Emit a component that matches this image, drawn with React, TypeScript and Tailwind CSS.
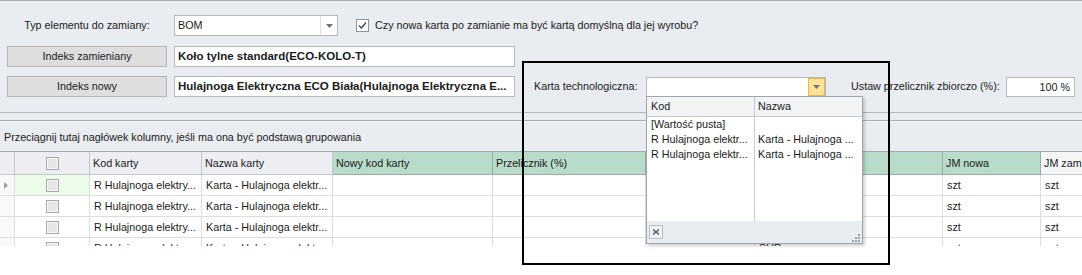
import React from 'react';

type Tone = 'gray' | 'green' | 'light';

const headTone: Record<Tone, string> = {
  gray: 'bg-[#eceef1] border-[#c3c8ce]',
  green: 'bg-[#b8dbca] border-[#95aea1]',
  light: 'bg-[#f4f5f7] border-[#c3c8ce]',
};

// kolumny pod listą rozwijaną nie mają widocznego nagłówka
const columns: { key: string; label: string; w: string; tone: Tone }[] = [
  { key: 'ind', label: '', w: 'w-[15px]', tone: 'gray' },
  { key: 'chk', label: '', w: 'w-[75px]', tone: 'gray' },
  { key: 'kod', label: 'Kod karty', w: 'w-[112px]', tone: 'gray' },
  { key: 'nazwa', label: 'Nazwa karty', w: 'w-[131px]', tone: 'gray' },
  { key: 'nowy', label: 'Nowy kod karty', w: 'w-[160px]', tone: 'green' },
  { key: 'prz', label: 'Przelicznik (%)', w: 'w-[153px]', tone: 'green' },
  { key: 'ilosc', label: '', w: 'w-[109px]', tone: 'green' },
  { key: 'opis', label: '', w: 'w-[188px]', tone: 'green' },
  { key: 'jmNowa', label: 'JM nowa', w: 'w-[98px]', tone: 'green' },
  { key: 'jmZam', label: 'JM zamieniany', w: 'w-[110px]', tone: 'light' },
];

const rows = [
  { kod: 'R Hulajnoga elektry...', nazwa: 'Karta - Hulajnoga elektr...', opis: '', jmNowa: 'szt', jmZam: 'szt' },
  { kod: 'R Hulajnoga elektry...', nazwa: 'Karta - Hulajnoga elektr...', opis: '', jmNowa: 'szt', jmZam: 'szt' },
  { kod: 'R Hulajnoga elektry...', nazwa: 'Karta - Hulajnoga elektr...', opis: '', jmNowa: 'szt', jmZam: 'szt' },
  { kod: 'R Hulajnoga elektry...', nazwa: 'Karta - Hulajnoga elektr...', opis: 'SUP', jmNowa: 'szt', jmZam: 'szt' },
];

const Arrow = () => (
  <svg width="7" height="4" viewBox="0 0 7 4">
    <path d="M0 0 H7 L3.5 4 Z" fill="#6d737a" />
  </svg>
);

const GridCheck = () => (
  <span className="block h-[13px] w-[13px] border border-[#a9a9a9] bg-[#e6e6e6] shadow-[inset_0_0_0_1px_#f6f6f6]" />
);

const App: React.FC = () => {
  return (
    <div className="relative h-[275px] w-[1082px] overflow-hidden bg-white font-['Liberation_Sans',Arial,sans-serif] text-[10.75px] text-[#1b1b1b]">
      {/* formularz */}
      <div className="border-t border-[#a7adb4] bg-[#e9ecf0] pt-[14px] pb-[15px]">
        <div className="flex h-[21px] items-center">
          <div className="ml-[7px] w-[160px] text-center">Typ elementu do zamiany:</div>
          <div className="ml-[7px] flex h-[21px] w-[164px] border border-[#b3b8bf] bg-white">
            <span className="flex-1 pl-[3px] leading-[19px]">BOM</span>
            <span className="flex w-[17px] items-center justify-center border-l border-[#dde0e4]">
              <Arrow />
            </span>
          </div>
          <span className="ml-[18px] flex h-[13px] w-[13px] items-center justify-center border border-[#8e949b] bg-white">
            <svg width="9" height="9" viewBox="0 0 9 9">
              <path d="M1 4.5 L3.5 7 L8 1.5" fill="none" stroke="#3f444a" strokeWidth="1.3" />
            </svg>
          </span>
          <span className="ml-[6px]">Czy nowa karta po zamianie ma być kartą domyślną dla jej wyrobu?</span>
        </div>

        <div className="mt-[10px] flex h-[21px] items-center">
          <button className="ml-[7px] h-[21px] w-[160px] border border-[#b4b4b4] bg-[#dedede] text-center">
            Indeks zamieniany
          </button>
          <div className="ml-[7px] h-[21px] w-[341px] overflow-hidden whitespace-nowrap border border-[#b3b8bf] bg-white pl-[3px] text-[11.5px] font-bold leading-[19px]">
            Koło tylne standard(ECO-KOLO-T)
          </div>
        </div>

        <div className="mt-[9px] flex h-[21px] items-center">
          <button className="ml-[7px] h-[21px] w-[160px] border border-[#b4b4b4] bg-[#dedede] text-center">
            Indeks nowy
          </button>
          <div className="ml-[7px] h-[21px] w-[341px] overflow-hidden whitespace-nowrap border border-[#b3b8bf] bg-white pl-[3px] text-[11.5px] font-bold leading-[19px]">
            Hulajnoga Elektryczna ECO Biała(Hulajnoga Elektryczna E...
          </div>
          <span className="ml-[19px] w-[112px]">Karta technologiczna:</span>
          <div className="flex h-[20px] w-[180px] border border-[#b3b8bf] bg-white">
            <span className="flex-1" />
            <span className="flex w-[17px] items-center justify-center border border-[#eab94e] bg-[#fde39a]">
              <Arrow />
            </span>
          </div>
          <span className="ml-[25px] w-[155px]">Ustaw przelicznik zbiorczo (%):</span>
          <div className="h-[20px] w-[69px] border border-[#b3b8bf] bg-white pr-[4px] text-right leading-[18px]">
            100 %
          </div>
        </div>
      </div>

      {/* separator + panel grupowania */}
      <div className="border-t border-[#b2b7be] bg-[#e9ecf0] pt-[7px]">
        <div className="border-t border-[#a9aeb5]">
          <div className="flex h-[30px] items-center border-t border-[#f3f4f6] pl-[4px] pt-[2px]">
            Przeciągnij tutaj nagłówek kolumny, jeśli ma ona być podstawą grupowania
          </div>
        </div>
      </div>

      {/* siatka */}
      <div className="h-[95px] overflow-hidden border-t border-[#a2a8af]">
        <div className="flex">
          {columns.map((c) => (
            <div
              key={c.key}
              className={`flex h-[23px] shrink-0 items-center overflow-hidden whitespace-nowrap border-r border-b px-[3px] ${c.w} ${headTone[c.tone]}`}
            >
              {c.key === 'chk' ? (
                <span className="mx-auto">
                  <GridCheck />
                </span>
              ) : (
                c.label
              )}
            </div>
          ))}
        </div>
        {rows.map((r, i) => (
          <div key={i} className="flex">
            {columns.map((c) => {
              const base = `flex h-[21px] shrink-0 items-center overflow-hidden whitespace-nowrap border-r border-b border-[#dadde1] px-[4px] ${c.w}`;
              if (c.key === 'ind')
                return (
                  <div key={c.key} className={`${base} bg-[#f8f9fa] px-[3px]`}>
                    {i === 0 && (
                      <svg width="4" height="7" viewBox="0 0 4 7">
                        <path d="M0 0 L4 3.5 L0 7 Z" fill="#9aa0a7" />
                      </svg>
                    )}
                  </div>
                );
              if (c.key === 'chk')
                return (
                  <div key={c.key} className={`${base} justify-center ${i === 0 ? 'bg-[#ebfde9]' : 'bg-white'}`}>
                    <GridCheck />
                  </div>
                );
              const val = (r as Record<string, string>)[c.key] ?? '';
              return (
                <div key={c.key} className={`${base} bg-white`}>
                  {val}
                </div>
              );
            })}
          </div>
        ))}
      </div>

      {/* lista rozwijana */}
      <div className="absolute left-[646px] top-[96px] flex h-[148px] w-[217px] flex-col border border-[#9fa5ac] bg-white shadow-[2px_2px_3px_rgba(0,0,0,0.18)]">
        <div className="flex h-[20px] shrink-0 border-b border-[#c5cad0] bg-[#f2f3f5]">
          <div className="flex w-[108px] items-center border-r border-[#c5cad0] pl-[4px]">Kod</div>
          <div className="flex flex-1 items-center pl-[3px]">Nazwa</div>
        </div>
        <div className="flex flex-1">
          <div className="w-[108px] border-r border-[#c9cdd2] pl-[4px] leading-[15px]">
            <div>[Wartość pusta]</div>
            <div>R Hulajnoga elektr...</div>
            <div>R Hulajnoga elektr...</div>
          </div>
          <div className="flex-1 pl-[3px] leading-[15px]">
            <div>&nbsp;</div>
            <div>Karta - Hulajnoga ...</div>
            <div>Karta - Hulajnoga ...</div>
          </div>
        </div>
        <div className="flex h-[22px] shrink-0 items-center justify-between bg-[#e9ecf0] pl-[2px] pr-[2px]">
          <span className="flex h-[14px] w-[14px] items-center justify-center border border-[#b9bec5] bg-[#f3f4f6]">
            <svg width="8" height="6" viewBox="0 0 8 6">
              <path d="M1 0.5 L7 5.5 M7 0.5 L1 5.5" stroke="#5d6268" strokeWidth="1.6" />
            </svg>
          </span>
          <svg className="mb-[1px] self-end" width="9" height="9" viewBox="0 0 9 9">
            <rect x="7" y="1" width="2" height="2" fill="#9aa0a6" />
            <rect x="4" y="4" width="2" height="2" fill="#9aa0a6" />
            <rect x="7" y="4" width="2" height="2" fill="#9aa0a6" />
            <rect x="1" y="7" width="2" height="2" fill="#9aa0a6" />
            <rect x="4" y="7" width="2" height="2" fill="#9aa0a6" />
            <rect x="7" y="7" width="2" height="2" fill="#9aa0a6" />
          </svg>
        </div>
      </div>

      {/* ramka zaznaczenia */}
      <div className="pointer-events-none absolute left-[522px] top-[61px] h-[204px] w-[368px] border-2 border-black" />
    </div>
  );
};

export default App;
